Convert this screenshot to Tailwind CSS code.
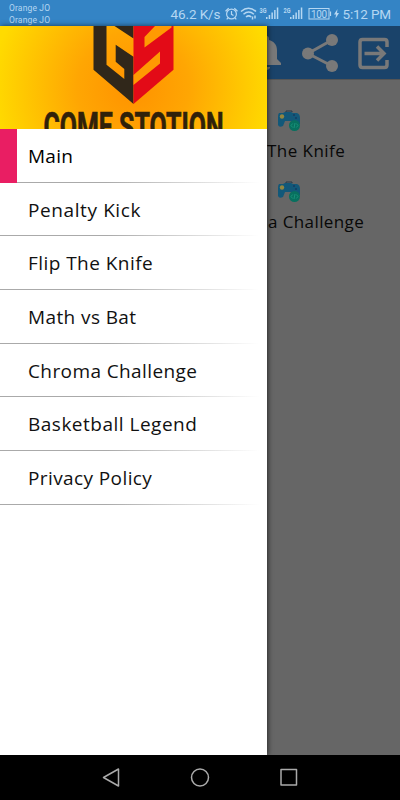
<!DOCTYPE html>
<html lang="en">
<head>
  <meta charset="UTF-8" />
  <title>Game Station</title>
  <script src="https://cdn.jsdelivr.net/npm/@tailwindcss/browser@4"></script>
</head>
<body class="relative w-[400px] h-[800px] overflow-hidden bg-[#666] flex flex-col font-['Open_Sans',sans-serif]">

  <!-- status bar -->
  <header class="h-[26px] shrink-0 bg-[#3484c5] text-[#b5d7f2] flex justify-between font-[Roboto,sans-serif]">
    <div class="pl-[9px] pt-[2px] text-[8.5px] leading-[12px] tracking-[0.15px]">
      <p>Orange JO</p>
      <p>Orange JO</p>
    </div>
    <svg width="235" height="26" viewBox="165 0 235 26" fill="none" stroke="#b5d7f2" stroke-width="1.2">
      <g fill="#b5d7f2" stroke="none" font-size="13.500">
        <text x="170.500" y="18.500" textLength="50">46.2 K/s</text>
        <text x="342.500" y="18.500" textLength="48.500">5:12 PM</text>
        <text x="311" y="17.500" font-size="10" textLength="16">100</text>
        <text x="259.500" y="12.500" font-size="7" font-weight="bold" textLength="7" lengthAdjust="spacingAndGlyphs">3G</text>
        <text x="283.500" y="12.500" font-size="7" font-weight="bold" textLength="7" lengthAdjust="spacingAndGlyphs">2G</text>
        <path d="M266 17h1.500v2h-1.500zM268.700 15h1.500v4h-1.500zM271.400 12.500h1.500v6.500h-1.500zM274.100 10h1.500v9h-1.500zM276.800 7.500h1.500v11.500h-1.500z" />
        <path d="M290 17h1.500v2h-1.500zM292.700 15h1.500v4h-1.500zM295.400 12.500h1.500v6.500h-1.500zM298.100 10h1.500v9h-1.500zM300.800 7.500h1.500v11.500h-1.500z" />
        <path d="M337.500 9l-3.500 5.500h2l-.5 4 3.500-5.500h-2z" />
      </g>
      <circle cx="231.500" cy="14" r="4.900" />
      <path d="M231.500 11v3.300l2 1.200M225.500 11.200l3.200-3M234.300 8.200l3.200 3M228 17.800l-1.300 1.500M235 17.800l1.300 1.500" />
      <path d="M241 11.500q7.500-6.500 15 0M243.500 14.300q5.200-4.500 10.400 0M246 17q2.600-2.300 5.200 0M252.500 16.500v3M255 15.500v3" stroke-width="1.500" />
      <rect x="309" y="8.500" width="20" height="10.500" stroke-width="1" />
      <path d="M330.500 11.500v4.500" />
    </svg>
  </header>

  <!-- dimmed page behind the drawer -->
  <main class="flex-1 flex flex-col bg-[#666]">
    <div class="h-[54px] bg-[#1a436a] border-b border-[#555]">
      <svg width="400" height="53" viewBox="0 26 400 53" fill="#797979">
        <path d="M253 65v-2l4-4v-9c0-6 4-9 8-10v-1c0-4 4-4 4 0v1c4 1 8 4 8 10v9l4 4v2zM263 67h7c0 4-7 4-7 0z" />
        <circle cx="332" cy="40" r="6" /><circle cx="308" cy="53.500" r="6" /><circle cx="332" cy="66" r="6" />
        <path d="M332 40L308 53.500 332 66" fill="none" stroke="#797979" stroke-width="3" />
        <path d="M387 47v-5q0-2.500-2.500-2.500h-22q-2.500 0-2.500 2.500v23q0 2.500 2.500 2.500h22q2.500 0 2.500-2.500v-5M364.500 53.500h19M377 46.500l7 7-7 7" fill="none" stroke="#797979" stroke-width="3.500" />
      </svg>
    </div>
    <div class="pl-[231px] pt-[30px] text-[17px] leading-[24px] text-[#080808]">
      <div class="h-[71px]">
        <svg class="ml-[46px]" width="24" height="22" viewBox="0 0 24 22">
          <path d="M2 3h4l2-1h6l2 1h4q3 1 3 5v6h-4l-3-3H8l-2 5q-4 2-5-1V7q0-3 1-4z" fill="#125879" />
          <path d="M9 2V1h6v1" fill="none" stroke="#24384a" />
          <circle cx="5" cy="6.500" r="2.200" fill="#938641" /><circle cx="17" cy="5" r="1" fill="#163b61" /><circle cx="19" cy="8" r="1" fill="#163b61" />
          <circle cx="17.500" cy="15.500" r="5.500" fill="#08705f" />
          <path d="M15.700 13.500L14 15.500l1.700 2M19.300 13.500l1.700 2-1.700 2M18 13l-1 5" fill="none" stroke="#1c9a80" stroke-width="0.800" />
        </svg>
        <p class="pl-[36px] pt-[7px] whitespace-nowrap tracking-[0.45px]">The Knife</p>
      </div>
      <div class="h-[71px]">
        <svg class="ml-[46px]" width="24" height="22" viewBox="0 0 24 22">
          <path d="M2 3h4l2-1h6l2 1h4q3 1 3 5v6h-4l-3-3H8l-2 5q-4 2-5-1V7q0-3 1-4z" fill="#125879" />
          <path d="M9 2V1h6v1" fill="none" stroke="#24384a" />
          <circle cx="5" cy="6.500" r="2.200" fill="#938641" /><circle cx="17" cy="5" r="1" fill="#163b61" /><circle cx="19" cy="8" r="1" fill="#163b61" />
          <circle cx="17.500" cy="15.500" r="5.500" fill="#08705f" />
          <path d="M15.700 13.500L14 15.500l1.700 2M19.300 13.500l1.700 2-1.700 2M18 13l-1 5" fill="none" stroke="#1c9a80" stroke-width="0.800" />
        </svg>
        <p class="pl-[37px] pt-[7px] whitespace-nowrap tracking-[0.4px]">a Challenge</p>
      </div>
    </div>
  </main>

  <!-- drawer -->
  <aside class="absolute left-0 top-[26px] w-[267px] h-[729px] bg-white shadow-[1px_0_5px_rgba(0,0,0,0.6)]">
    <svg class="block" width="267" height="103" viewBox="0 26 267 103">
      <defs>
        <radialGradient id="glow" gradientUnits="userSpaceOnUse" cx="133" cy="88" r="140">
          <stop offset="0" stop-color="#ff9200" />
          <stop offset="0.400" stop-color="#ffa603" />
          <stop offset="1" stop-color="#ffdb00" />
        </radialGradient>
      </defs>
      <rect y="26" width="267" height="103" fill="url(#glow)" />
      <path d="M93.500 26H106.500V64.700L124.300 79V69L115.700 61.700V44.700L133.500 56.700V104L93.500 69.700zM114.500 26H133.500V38.500z" fill="#30271a" />
      <path d="M133.500 26H173.500V69.700L133.500 104z" fill="#e30b17" />
      <path d="M155 26L144.500 37V47.500L171.500 27.500V26zM133.500 75L160 51.500V63.500L133.500 85z" fill="#ff9a02" />
      <text x="43.500" y="140" font-family="Roboto, sans-serif" font-weight="bold" font-size="39" textLength="180" lengthAdjust="spacingAndGlyphs" fill="#30210a" stroke="#30210a" stroke-width="0.700">COME STOTION</text>
    </svg>
    <nav class="text-[19px] leading-[54px] text-[#111]">
      <div class="h-[53.7px] flex"><span class="w-[17px] bg-[#e91e63]"></span><a class="pl-[11px] text-black tracking-[0.25px]">Main</a></div>
      <div class="h-px -mt-px bg-linear-to-r from-[#aaa] from-40% to-white to-97%"></div>
      <div class="h-[52.7px] pl-[28px] tracking-[0.6px]">Penalty Kick</div>
      <div class="h-px bg-linear-to-r from-[#aaa] from-40% to-white to-97%"></div>
      <div class="h-[52.7px] pl-[28px] tracking-[0.45px]">Flip The Knife</div>
      <div class="h-px bg-linear-to-r from-[#aaa] from-40% to-white to-97%"></div>
      <div class="h-[52.7px] pl-[28px] tracking-[0.4px]">Math vs Bat</div>
      <div class="h-px bg-linear-to-r from-[#aaa] from-40% to-white to-97%"></div>
      <div class="h-[52.7px] pl-[28px] tracking-[0.4px]">Chroma Challenge</div>
      <div class="h-px bg-linear-to-r from-[#aaa] from-40% to-white to-97%"></div>
      <div class="h-[52.7px] pl-[28px] tracking-[0.5px]">Basketball Legend</div>
      <div class="h-px bg-linear-to-r from-[#aaa] from-40% to-white to-97%"></div>
      <div class="h-[52.7px] pl-[28px] tracking-[0.4px]">Privacy Policy</div>
      <div class="h-px bg-linear-to-r from-[#aaa] from-40% to-white to-97%"></div>
    </nav>
  </aside>

  <!-- navigation bar -->
  <footer class="relative h-[45px] shrink-0 bg-black">
    <svg width="400" height="45" viewBox="0 755 400 45" fill="none" stroke="#aaa" stroke-width="1.500" stroke-linejoin="round">
      <path d="M103.500 777.500L118.500 769V786z" />
      <circle cx="200" cy="777.500" r="8.500" />
      <rect x="281" y="769.500" width="15.500" height="15.500" />
    </svg>
  </footer>
</body>
</html>
